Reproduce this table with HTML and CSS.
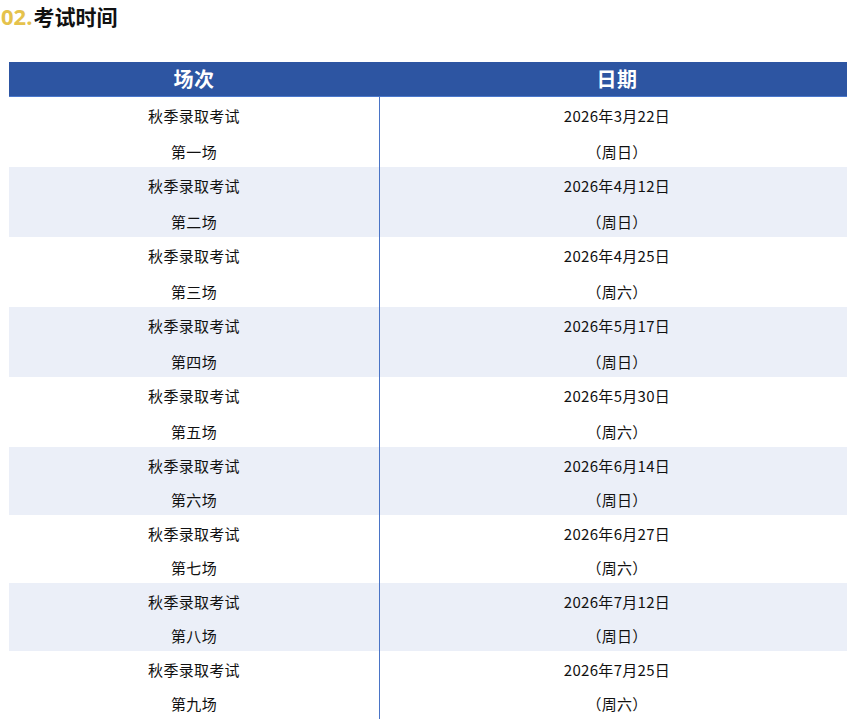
FILE: index.html
```html
<!DOCTYPE html>
<html lang="zh-CN">
<head>
<meta charset="utf-8">
<title>考试时间</title>
<link rel="stylesheet" href="styles.css">
</head>
<body>
<h2 class="title"><span class="num">02.</span>考试时间</h2>
<div class="table">
  <div class="row head"><div class="cell">场次</div><div class="cell c2">日期</div></div>
  <div class="row"><div class="cell"><p>秋季录取考试</p><p>第一场</p></div><div class="cell c2"><p>2026年3月22日</p><p>（周日）</p></div></div>
  <div class="row alt"><div class="cell"><p>秋季录取考试</p><p>第二场</p></div><div class="cell c2"><p>2026年4月12日</p><p>（周日）</p></div></div>
  <div class="row"><div class="cell"><p>秋季录取考试</p><p>第三场</p></div><div class="cell c2"><p>2026年4月25日</p><p>（周六）</p></div></div>
  <div class="row alt"><div class="cell"><p>秋季录取考试</p><p>第四场</p></div><div class="cell c2"><p>2026年5月17日</p><p>（周日）</p></div></div>
  <div class="row"><div class="cell"><p>秋季录取考试</p><p>第五场</p></div><div class="cell c2"><p>2026年5月30日</p><p>（周六）</p></div></div>
  <div class="row alt short"><div class="cell"><p>秋季录取考试</p><p>第六场</p></div><div class="cell c2"><p>2026年6月14日</p><p>（周日）</p></div></div>
  <div class="row short"><div class="cell"><p>秋季录取考试</p><p>第七场</p></div><div class="cell c2"><p>2026年6月27日</p><p>（周六）</p></div></div>
  <div class="row alt short"><div class="cell"><p>秋季录取考试</p><p>第八场</p></div><div class="cell c2"><p>2026年7月12日</p><p>（周日）</p></div></div>
  <div class="row short"><div class="cell"><p>秋季录取考试</p><p>第九场</p></div><div class="cell c2"><p>2026年7月25日</p><p>（周六）</p></div></div>
</div>
</body>
</html>
```
FILE: styles.css
```css
html, body {
  margin: 0;
  padding: 0;
  background: #ffffff;
  font-family: "Noto Sans CJK SC", "Noto Sans", sans-serif;
  color: #111111;
}
.title {
  margin: 0;
  height: 62px;
  padding: 2px 0 0 1px;
  box-sizing: border-box;
  font-size: 21px;
  line-height: 28px;
  font-weight: 700;
  color: #111111;
}
.title .num {
  color: #E5C24C;
  font-family: "Open Sans", "Noto Sans", sans-serif;
  font-size: 22px;
  margin-right: 1px;
}
.table {
  margin-left: 9px;
  width: 838px;
}
.row {
  display: grid;
  grid-template-columns: 370px 1fr;
  height: 70px;
  font-size: 15px;
  letter-spacing: 0.3px;
}
.row.alt {
  background: #EBEFF8;
}
.row.short {
  height: 68px;
}
.cell {
  text-align: center;
  padding-top: 1px;
}
.cell.c2 {
  border-left: 1px solid #4A74C6;
  padding-left: 7px;
}
.cell p {
  margin: 0;
  line-height: 36px;
}
.row.short .cell {
  padding-top: 2px;
}
.row.short .cell p {
  line-height: 34px;
}
.row.head {
  height: 35px;
  background: #2D55A2;
  border-bottom: 1px solid #4A78CC;
  box-sizing: border-box;
  color: #ffffff;
  font-size: 20px;
  font-weight: 700;
  letter-spacing: 0.5px;
}
.row.head .cell {
  padding-top: 0;
  line-height: 34px;
}
.row.head .cell.c2 {
  border-left: none;
  padding-left: 8px;
}
```
